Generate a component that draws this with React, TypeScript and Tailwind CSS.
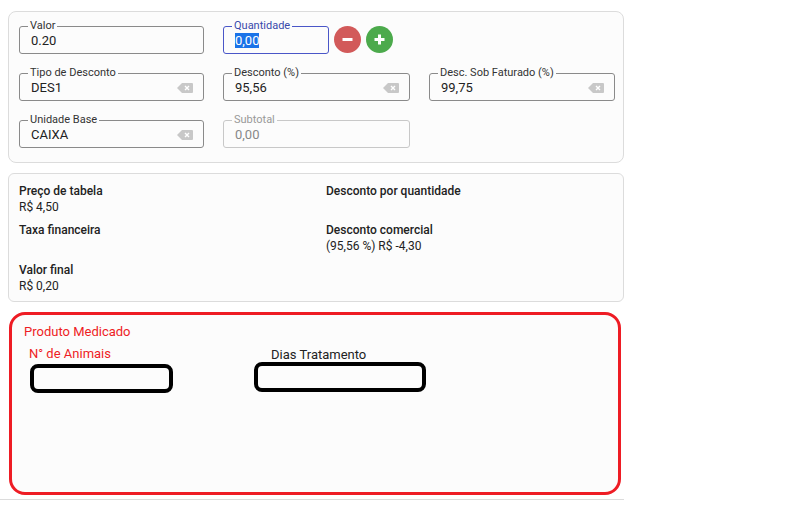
import React from "react";

const Clear = () => (
  <svg width="16" height="10" viewBox="0 0 16 10" className="shrink-0">
    <path d="M5 0H15a1 1 0 0 1 1 1v8a1 1 0 0 1-1 1H5L0 5z" fill="#c8c8c8" />
    <path d="M8 3l4 4M12 3l-4 4" stroke="#fff" strokeWidth="1.4" />
  </svg>
);

function Field({ label, value, w, clear, focus, disabled }: { label: string; value: string; w: string; clear?: boolean; focus?: boolean; disabled?: boolean }) {
  return (
    <fieldset className={`${w} h-[34px] rounded-[3px] border px-[10px] pb-[2px] ${focus ? "border-[#4a56c8] border-[1.5px]" : disabled ? "border-[#c8c8c8]" : "border-[#8a8a8a]"}`}>
      <legend className={`px-[2px] -ml-[2px] text-[11px] leading-[12px] ${focus ? "text-[#3949ab]" : disabled ? "text-[#999]" : "text-[#333]"}`}>{label}</legend>
      <div className="flex items-center justify-between h-[18px]">
        <span className={`text-[13px] ml-[1px] ${disabled ? "text-[#888]" : "text-[#222]"}`}>
          {focus ? <span className="bg-[#1a73e8] text-white">{value}</span> : value}
        </span>
        {clear && <Clear />}
      </div>
    </fieldset>
  );
}

const Circle = ({ color, plus }: { color: string; plus?: boolean }) => (
  <div className={`w-[27px] h-[27px] rounded-full ${color} flex items-center justify-center`}>
    <svg width="13" height="13" viewBox="0 0 13 13">
      <path d="M1.5 6.5h10" stroke="#fff" strokeWidth="3" />
      {plus && <path d="M6.5 1.5v10" stroke="#fff" strokeWidth="3" />}
    </svg>
  </div>
);

const Info = ({ t, v }: { t: string; v?: string }) => (
  <div className="h-[39px]">
    <div className="text-[12px] font-medium text-[#222] leading-[16px]">{t}</div>
    {v && <div className="text-[12px] text-[#222] leading-[16px]">{v}</div>}
  </div>
);

export default function App() {
  return (
    <div className="w-[800px] h-[507px] bg-white font-[Roboto,sans-serif] pt-[11px]">
      <div className="w-[624px]">
        <div className="ml-[8px] w-[616px] rounded-[8px] border border-[#dcdcdc] bg-[#fcfcfc] pl-[10px] pt-[8px] pb-[14px] flex flex-col gap-[13px]">
          <div className="flex items-end">
            <Field label="Valor" value="0.20" w="w-[185px]" />
            <div className="w-[19px]" />
            <Field label="Quantidade" value="0,00" w="w-[106px]" focus />
            <div className="flex gap-[5px] ml-[5px] mb-[1px]"><Circle color="bg-[#d25a5a]" /><Circle color="bg-[#4caa4c]" plus /></div>
          </div>
          <div className="flex items-end gap-[19px]">
            <Field label="Tipo de Desconto" value="DES1" w="w-[185px]" clear />
            <Field label="Desconto (%)" value="95,56" w="w-[187px]" clear />
            <Field label="Desc. Sob Faturado (%)" value="99,75" w="w-[186px]" clear />
          </div>
          <div className="flex items-end gap-[19px]">
            <Field label="Unidade Base" value="CAIXA" w="w-[185px]" clear />
            <Field label="Subtotal" value="0,00" w="w-[187px]" disabled />
          </div>
        </div>
        <div className="ml-[8px] mt-[10px] w-[616px] h-[129px] rounded-[6px] border border-[#dcdcdc] bg-[#fcfcfc] pl-[10px] pt-[9px] grid grid-cols-[307px_1fr]">
          <Info t="Preço de tabela" v="R$ 4,50" />
          <Info t="Desconto por quantidade" />
          <Info t="Taxa financeira" />
          <Info t="Desconto comercial" v="(95,56 %) R$ -4,30" />
          <Info t="Valor final" v="R$ 0,20" />
        </div>
        <div className="ml-[9px] mt-[10px] w-[612px] h-[183px] rounded-[16px] border-[3px] border-[#ee1c24] bg-[#fcfcfc] font-['Open_Sans',sans-serif] pl-[12px] pt-[7px]">
          <div className="text-[13px] text-[#ee1c24]">Produto Medicado</div>
          <div className="flex mt-[4px]">
            <div className="w-[230px]">
              <div className="text-[13px] text-[#ee1c24] ml-[5px] leading-[16px]">N° de Animais</div>
              <div className="mt-[2px] ml-[6px] w-[143px] h-[29px] rounded-[8px] border-[4px] border-black" />
            </div>
            <div>
              <div className="text-[13px] text-[#222] ml-[17px] mt-[2px] leading-[14px]">Dias Tratamento</div>
              <div className="w-[172px] h-[30px] rounded-[8px] border-[4px] border-black" />
            </div>
          </div>
        </div>
        <div className="mt-[4px] h-px bg-[#dcdcdc]" />
      </div>
    </div>
  );
}
